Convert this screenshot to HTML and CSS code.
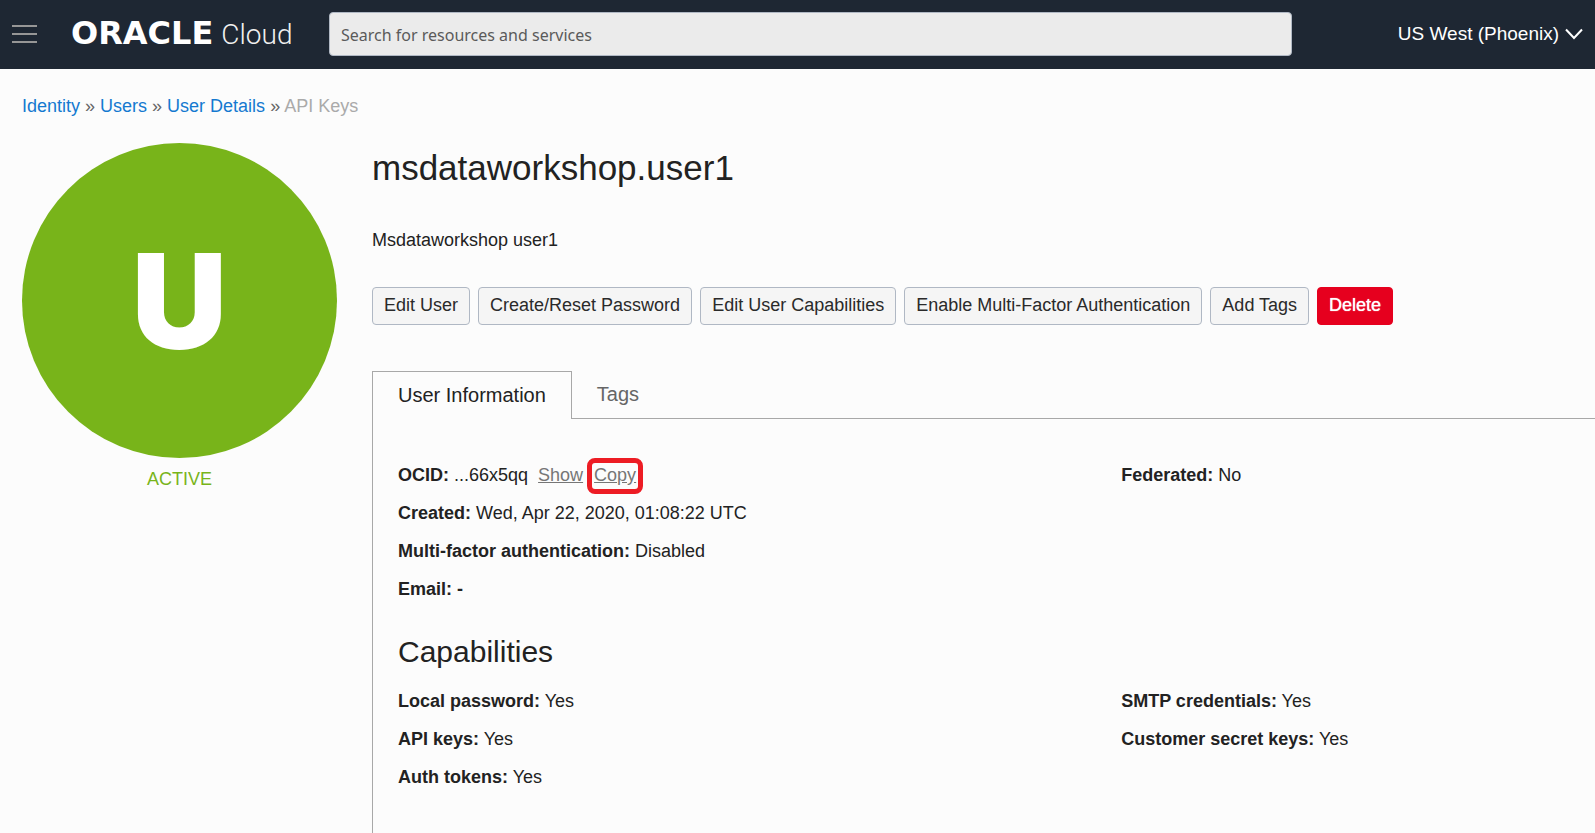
FILE: index.html
```html
<!DOCTYPE html>
<html lang="en">
<head>
<meta charset="utf-8">
<title>msdataworkshop.user1 - Oracle Cloud</title>
<link rel="stylesheet" href="styles.css">
</head>
<body>
<header class="topbar">
  <button class="menu" type="button" aria-label="Open navigation menu">
    <svg width="25" height="20" viewBox="0 0 25 20"><path d="M0 2h25M0 10h25M0 18h25" stroke="#969696" stroke-width="2"/></svg>
  </button>
  <a class="brand" href="#"><span class="brand-name">ORACLE</span><span class="brand-product">Cloud</span></a>
  <input class="search" type="search" aria-label="Search" placeholder="Search for resources and services">
  <button class="region" type="button">US West (Phoenix)
    <svg width="18" height="12" viewBox="0 0 18 12" fill="none"><path d="M1 1.500l8 8.500 8-8.500" stroke="#fff" stroke-width="2"/></svg>
  </button>
</header>
<nav class="crumbs" aria-label="Breadcrumb">
  <a href="#">Identity</a> » <a href="#">Users</a> » <a href="#">User Details</a> » <span class="crumb-current">API Keys</span>
</nav>
<main class="layout">
  <aside class="status">
    <div class="avatar">U</div>
    <div class="state">ACTIVE</div>
  </aside>
  <section class="details">
    <h1 class="title">msdataworkshop.user1</h1>
    <p class="description">Msdataworkshop user1</p>
    <div class="actions">
      <button class="btn" type="button">Edit User</button>
      <button class="btn" type="button">Create/Reset Password</button>
      <button class="btn" type="button">Edit User Capabilities</button>
      <button class="btn" type="button">Enable Multi-Factor Authentication</button>
      <button class="btn" type="button">Add Tags</button>
      <button class="btn btn-danger" type="button">Delete</button>
    </div>
    <div class="tabs" role="tablist">
      <button class="tab tab-active" type="button" role="tab" aria-selected="true">User Information</button>
      <button class="tab" type="button" role="tab" aria-selected="false">Tags</button>
    </div>
    <div class="panel" role="tabpanel">
      <div class="columns">
        <div>
          <div class="row"><b>OCID:</b> ...66x5qq <a class="ocid-link" href="#">Show</a><a class="ocid-link copy" href="#">Copy</a></div>
          <div class="row"><b>Created:</b> Wed, Apr 22, 2020, 01:08:22 UTC</div>
          <div class="row"><b>Multi-factor authentication:</b> Disabled</div>
          <div class="row"><b>Email:</b> <b>-</b></div>
        </div>
        <div>
          <div class="row"><b>Federated:</b> No</div>
        </div>
      </div>
      <h2 class="subtitle">Capabilities</h2>
      <div class="columns">
        <div>
          <div class="row"><b>Local password:</b> Yes</div>
          <div class="row"><b>API keys:</b> Yes</div>
          <div class="row"><b>Auth tokens:</b> Yes</div>
        </div>
        <div>
          <div class="row"><b>SMTP credentials:</b> Yes</div>
          <div class="row"><b>Customer secret keys:</b> Yes</div>
        </div>
      </div>
    </div>
  </section>
</main>
</body>
</html>
```
FILE: styles.css
```css
* { box-sizing: border-box; }

body {
  margin: 0;
  min-height: 100vh;
  display: flex;
  flex-direction: column;
  background: #fcfcfc;
  color: #222;
  font: 18px/24px "Liberation Sans", Arial, sans-serif;
}

button { font: inherit; cursor: pointer; }

.topbar {
  display: flex;
  align-items: center;
  height: 69px;
  padding: 0 12px 1px;
  background: #1e2733;
  color: #fff;
}

.menu, .region {
  display: flex;
  align-items: center;
  padding: 0;
  border: 0;
  background: none;
  color: inherit;
}

.brand {
  display: flex;
  align-items: baseline;
  gap: 8px;
  width: 258px;
  margin-left: 34px;
  color: #fff;
  text-decoration: none;
  line-height: 36px;
}

.brand-name { font-family: "DejaVu Sans", sans-serif; font-weight: 700; font-size: 32px; }
.brand-product { font-family: Roboto, sans-serif; font-weight: 300; font-size: 28px; color: #f0f0f0; }

.search {
  flex: 1;
  height: 44px;
  margin-right: 106px;
  padding: 2px 11px 0;
  border: 1px solid #b0b8c4;
  border-radius: 4px;
  background: #ebebeb;
  font: 16px "Noto Sans", sans-serif;
}

.search::placeholder { color: #5a5a5a; opacity: 1; }

.region { gap: 6px; font-size: 19px; }

.crumbs { padding: 25px 22px 0; color: #666; }
.crumbs a { color: #1479d0; text-decoration: none; }
.crumbs .crumb-current { color: #aaa; }

.layout {
  flex: 1;
  display: grid;
  grid-template-columns: 315px 1fr;
  gap: 35px;
  padding: 25px 0 0 22px;
}

.avatar {
  display: flex;
  align-items: center;
  justify-content: center;
  aspect-ratio: 1;
  border-radius: 50%;
  background: #78b41a;
  color: #fff;
  font: 900 132px/1 Inter, sans-serif;
}

.state { padding-top: 9px; color: #78b41a; text-align: center; }

.details { display: flex; flex-direction: column; }
.title { margin: 0; font-size: 35px; line-height: 50px; font-weight: 400; }
.description { margin: 35px 0; }
.actions { display: flex; gap: 8px; }

.btn {
  height: 38px;
  padding: 0 11px 2px;
  border: 1px solid #b0b8c4;
  border-radius: 4px;
  background: #f5f5f5;
  color: #2a2a2a;
  white-space: nowrap;
}

.btn-danger {
  border-color: #e6001e;
  background: #e6001e;
  color: #fff;
  text-shadow: 0 0 1px #fff;
}

.tabs {
  display: flex;
  margin-top: 46px;
  border-bottom: 1px solid #a8a8a8;
}

.tab {
  height: 47px;
  padding: 0 25px 2px;
  border: 0;
  background: none;
  color: #666;
  font-size: 20px;
}

.tab-active {
  height: 48px;
  margin-bottom: -1px;
  border: 1px solid #a8a8a8;
  border-bottom: 0;
  background: #fcfcfc;
  color: #222;
}

.panel {
  flex: 1;
  padding: 37px 0 24px 25px;
  border-left: 1px solid #a8a8a8;
}

.columns { display: grid; grid-template-columns: 29fr 19fr; }
.row { line-height: 38px; }
.subtitle { margin: 24px 0 10px; font-size: 30px; line-height: 40px; font-weight: 400; }

.ocid-link { margin-left: 5px; color: #767676; }

.copy { position: relative; margin-left: 11px; }

.copy::after {
  content: "";
  position: absolute;
  inset: -7px -7px -9px;
  border: 5px solid #ed1c24;
  border-radius: 8px;
}
```
